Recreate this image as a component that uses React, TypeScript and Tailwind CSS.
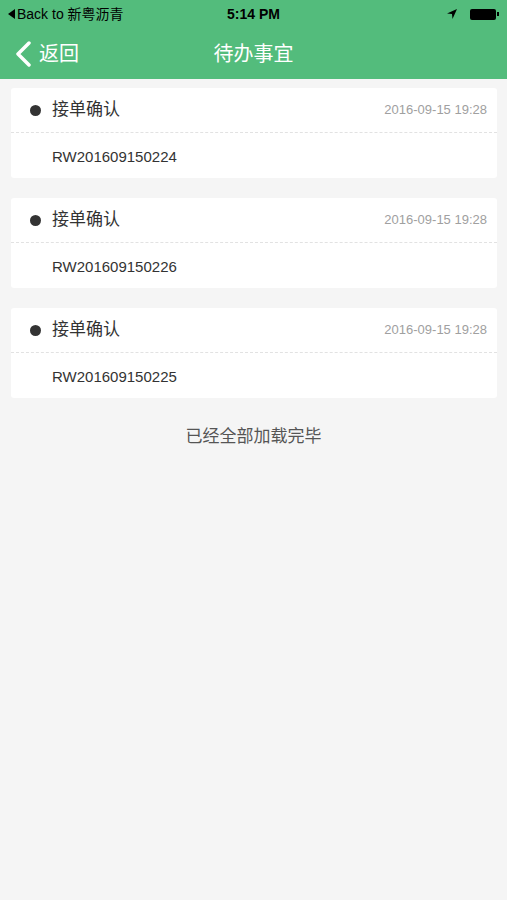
import React from 'react';

const items = [
  { title: '接单确认', time: '2016-09-15 19:28', code: 'RW201609150224' },
  { title: '接单确认', time: '2016-09-15 19:28', code: 'RW201609150226' },
  { title: '接单确认', time: '2016-09-15 19:28', code: 'RW201609150225' },
];

const font = { fontFamily: '"Helvetica Neue", "Liberation Sans", "Noto Sans CJK SC", sans-serif' };

export default function App() {
  return (
    <div className="min-h-[900px] w-[507px] bg-[#f5f5f5]" style={font}>
      {/* Status bar + nav */}
      <header className="bg-[#53bc7c] text-white">
        <div className="relative flex h-[28px] items-center px-[8px] text-[14px]">
          <div className="flex items-center">
            <svg width="7" height="10" viewBox="0 0 7 10" className="mr-[2px]">
              <path d="M7 0 L0 5 L7 10 Z" fill="black" />
            </svg>
            <span className="text-black">Back to 新粤沥青</span>
          </div>
          <div className="absolute left-0 right-0 text-center text-[14px] font-bold text-black">5:14 PM</div>
          <div className="ml-auto flex items-center gap-[12px]">
            <svg width="12" height="12" viewBox="0 0 12 12">
              <path d="M11 1 L1 5.5 L6 6 L6.5 11 Z" fill="black" />
            </svg>
            <div className="flex items-center">
              <div className="h-[11px] w-[26px] rounded-[2px] bg-black" />
              <div className="ml-[1px] h-[4px] w-[2px] bg-black" />
            </div>
          </div>
        </div>
        <div className="relative flex h-[51px] items-center px-[14px]">
          <svg width="18" height="26" viewBox="0 0 18 26">
            <path d="M15 2 L4 13 L15 24" fill="none" stroke="white" strokeWidth="3.5" strokeLinecap="round" strokeLinejoin="round" />
          </svg>
          <span className="ml-[7px] text-[20px]">返回</span>
          <div className="absolute left-0 right-0 text-center text-[20px] pointer-events-none">待办事宜</div>
        </div>
      </header>

      <main className="flex flex-col gap-[20px] pl-[11px] pr-[10px] pt-[9px]">
        {items.map((it, i) => (
          <div key={i} className="rounded-[3px] bg-white">
            <div className="flex h-[45px] items-center border-b border-dashed border-[#e2e2e2] pl-[19px] pr-[10px]">
              <span className="h-[11px] w-[11px] rounded-full bg-[#333]" />
              <span className="ml-[11px] text-[17px] text-[#333]">{it.title}</span>
              <span className="ml-auto text-[13px] text-[#a0a0a0]">{it.time}</span>
            </div>
            <div className="flex h-[45px] items-center pl-[41px] pt-[3px] text-[15px] text-[#333]">{it.code}</div>
          </div>
        ))}
      </main>

      <div className="pt-[26px] text-center text-[17px] text-[#555]">已经全部加载完毕</div>
    </div>
  );
}
